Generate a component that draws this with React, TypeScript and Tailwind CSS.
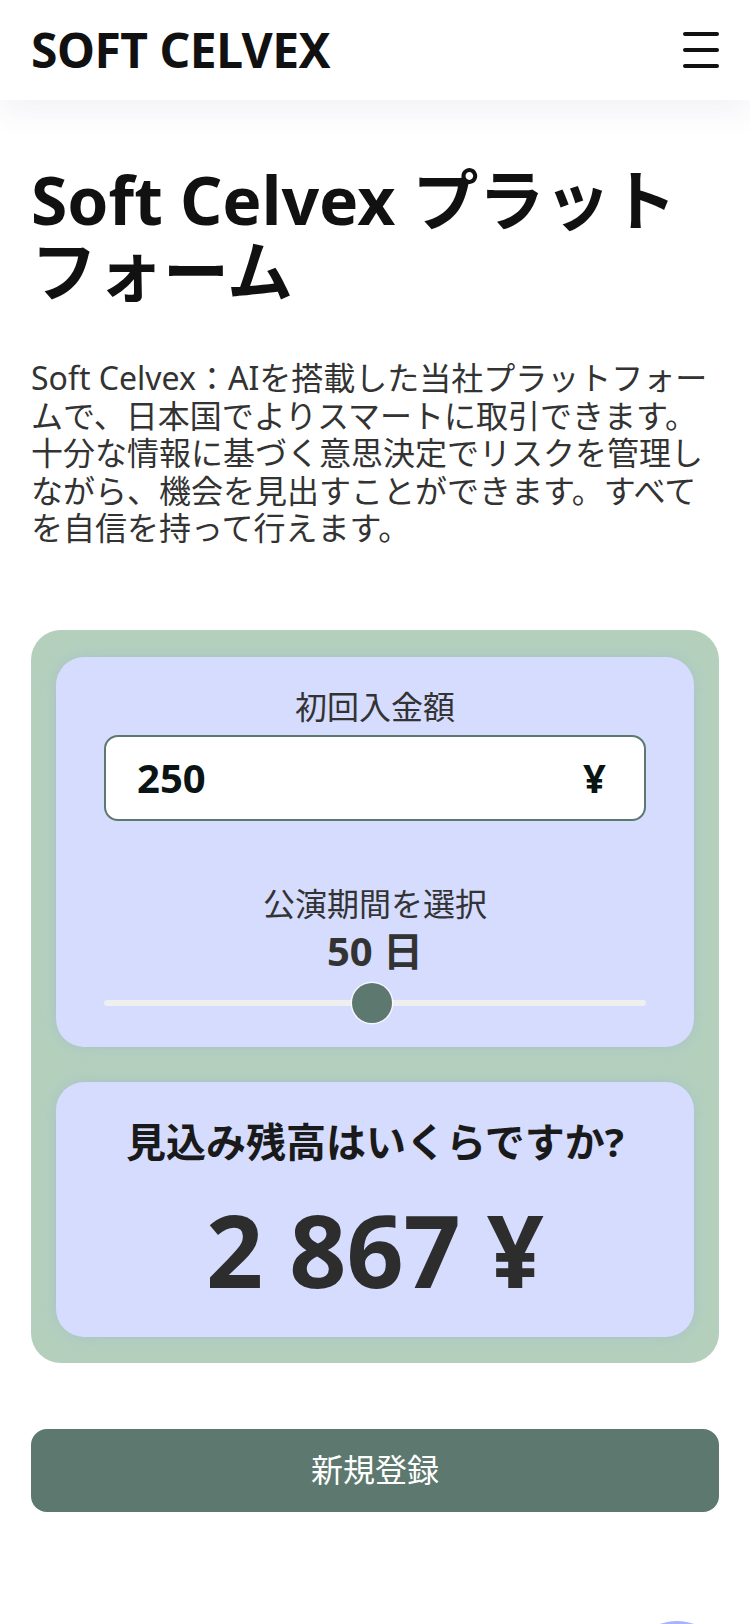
import { useState } from "react"

const FONT = { fontFamily: "'Noto Sans', 'Noto Sans CJK JP', sans-serif" }

function Header() {
  return (
    <header className="relative z-10 flex h-[100px] items-center justify-between bg-white px-[31px] shadow-[0_12px_30px_rgba(70,70,140,0.07)]">
      <span className="text-[48px] font-bold leading-none tracking-[-0.5px] text-[#111]">SOFT CELVEX</span>
      <button aria-label="menu" className="flex w-[36px] flex-col gap-[12px]">
        <span className="h-[4px] w-full rounded-full bg-[#111]" />
        <span className="h-[4px] w-full rounded-full bg-[#111]" />
        <span className="h-[4px] w-full rounded-full bg-[#111]" />
      </button>
    </header>
  )
}

function DaySlider({ days }: { days: number }) {
  const pct = ((days - 1) / 99) * 100
  return (
    <div className="relative mt-[10px] h-[40px] w-full">
      <div className="absolute top-[17px] left-0 h-[6px] w-full rounded-full bg-[#efefef]" />
      <div
        className="absolute top-0 h-[40px] w-[40px] -translate-x-1/2 rounded-full bg-[#5d786e] shadow-[0_0_0_1.5px_rgba(255,255,255,0.7)]"
        style={{ left: `${pct}%` }}
      />
    </div>
  )
}

export default function App() {
  const [amount, setAmount] = useState("250")
  const days = 50

  return (
    <div className="min-h-screen bg-white text-[#333]" style={FONT}>
      <Header />

      <main className="px-[31px] pt-[64px] pb-[80px]">
        <h1 className="text-[66px] font-bold leading-[71px] text-[#111]">Soft Celvex プラットフォーム</h1>

        <p className="mt-[53px] text-[32px] leading-[37.5px] text-[#333]">
          Soft Celvex：AIを搭載した当社プラットフォームで、日本国でよりスマートに取引できます。十分な情報に基づく意思決定でリスクを管理しながら、機会を見出すことができます。すべてを自信を持って行えます。
        </p>

        <section className="mt-[83px] flex flex-col gap-[35px] rounded-[30px] bg-[#b4d0bd] px-[25px] pt-[27px] pb-[26px]">
          <div className="flex flex-col items-center rounded-[28px] bg-[#d5dcfe] px-[48px] pt-[30px] pb-[24px] shadow-[0_0_14px_rgba(150,170,220,0.35)]">
            <label className="text-[32px] leading-[40px] text-[#333]">初回入金額</label>
            <div className="mt-[8px] flex h-[86px] w-full items-center rounded-[14px] border-2 border-[#5d786e] bg-white pr-[38px] pl-[31px]">
              <input
                value={amount}
                onChange={(e) => setAmount(e.target.value)}
                className="w-full min-w-0 bg-transparent text-[40px] font-bold text-[#0b1414] outline-none"
              />
              <span className="text-[40px] font-bold text-[#0b1414]">¥</span>
            </div>

            <span className="mt-[63px] text-[32px] leading-[40px] text-[#333]">公演期間を選択</span>
            <span className="mt-[5px] text-[40px] font-bold leading-[44px] text-[#333]">{days} 日</span>
            <DaySlider days={days} />
          </div>

          <div className="flex flex-col items-center rounded-[28px] bg-[#d5dcfe] pt-[35px] pb-[33px] shadow-[0_0_14px_rgba(150,170,220,0.35)]">
            <h2 className="text-[40px] font-bold leading-[50px] text-[#1a1a1a]">見込み残高はいくらですか?</h2>
            <div className="mt-[27px] text-[100px] font-bold leading-[110px] text-[#2d2d2d]">2 867 ¥</div>
          </div>
        </section>

        <button className="mt-[66px] flex h-[83px] w-full items-center justify-center rounded-[16px] bg-[#5d786e] text-[32px] text-white">
          新規登録
        </button>
      </main>

      <div className="fixed right-[23px] -bottom-[97px] h-[100px] w-[100px] rounded-full bg-gradient-to-b from-[#a9b3ff] to-[#8e9cf5]" />
    </div>
  )
}
